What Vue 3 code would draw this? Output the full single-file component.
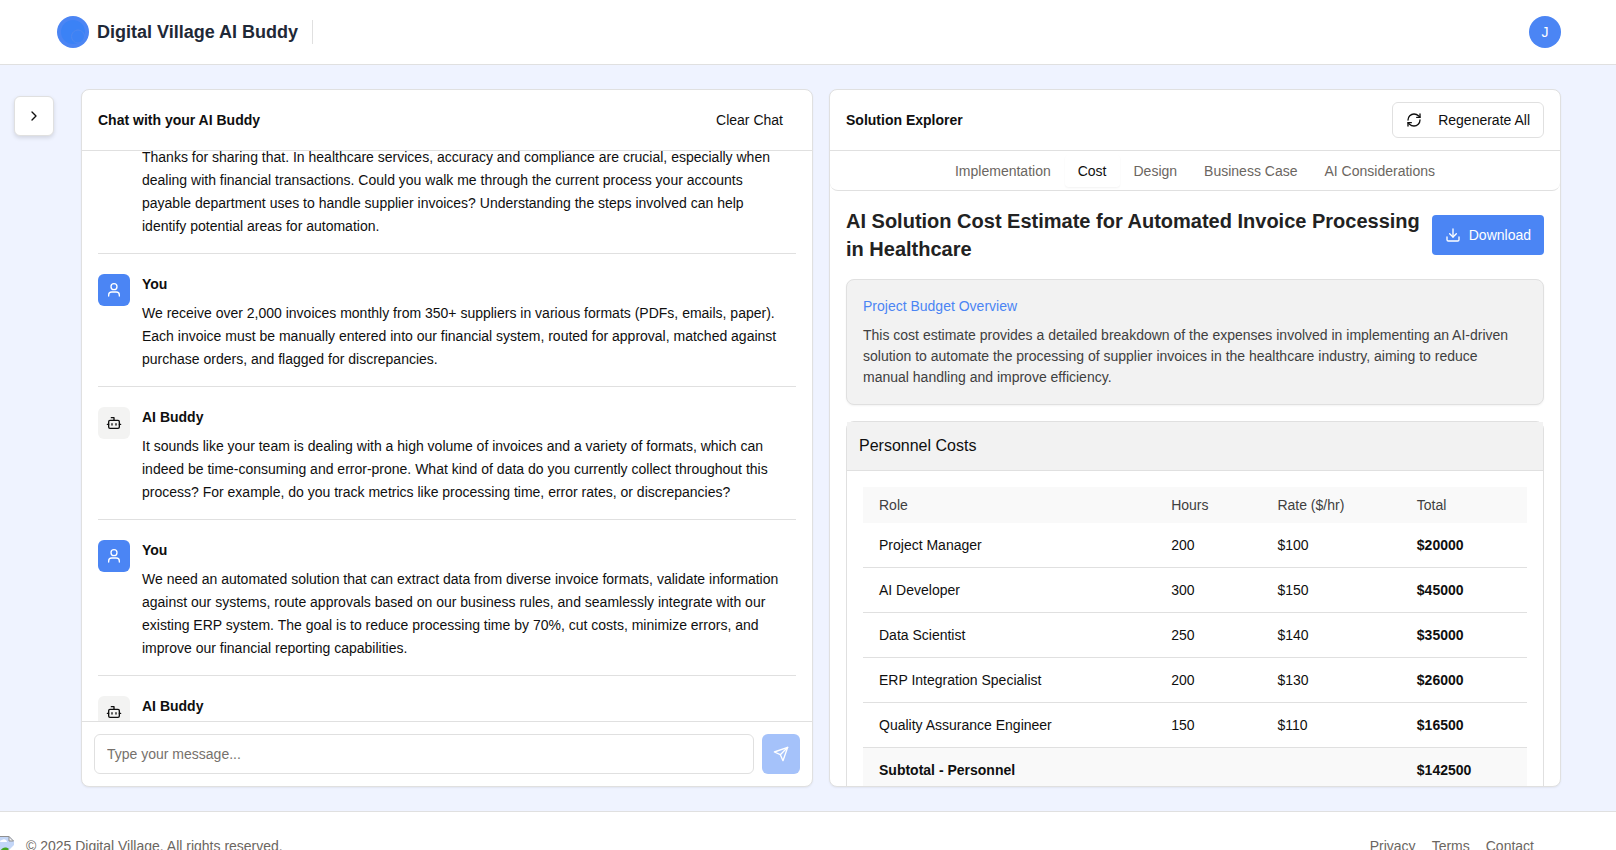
<script setup>
import { ref, onMounted } from 'vue'

const messages = [
  { who: '', text: 'Thanks for sharing that. In healthcare services, accuracy and compliance are crucial, especially when dealing with financial transactions. Could you walk me through the current process your accounts payable department uses to handle supplier invoices? Understanding the steps involved can help identify potential areas for automation.' },
  { who: 'You', text: 'We receive over 2,000 invoices monthly from 350+ suppliers in various formats (PDFs, emails, paper). Each invoice must be manually entered into our financial system, routed for approval, matched against purchase orders, and flagged for discrepancies.' },
  { who: 'AI Buddy', text: 'It sounds like your team is dealing with a high volume of invoices and a variety of formats, which can indeed be time-consuming and error-prone. What kind of data do you currently collect throughout this process? For example, do you track metrics like processing time, error rates, or discrepancies?' },
  { who: 'You', text: 'We need an automated solution that can extract data from diverse invoice formats, validate information against our systems, route approvals based on our business rules, and seamlessly integrate with our existing ERP system. The goal is to reduce processing time by 70%, cut costs, minimize errors, and improve our financial reporting capabilities.' },
  { who: 'AI Buddy', text: '' }
]

const tabs = ['Implementation', 'Cost', 'Design', 'Business Case', 'AI Considerations']
const activeTab = ref('Cost')

const rows = [
  { role: 'Project Manager', hours: 200, rate: 100 },
  { role: 'AI Developer', hours: 300, rate: 150 },
  { role: 'Data Scientist', hours: 250, rate: 140 },
  { role: 'ERP Integration Specialist', hours: 200, rate: 130 },
  { role: 'Quality Assurance Engineer', hours: 150, rate: 110 }
]
const subtotal = rows.reduce((sum, r) => sum + r.hours * r.rate, 0)

const draft = ref('')
const list = ref(null)

onMounted(() => {
  list.value.scrollTop = 33
})
</script>

<template>
  <div class="page">
    <header class="topbar">
      <svg class="logo" viewBox="0 0 32 32" aria-hidden="true">
        <circle cx="16" cy="16" r="16" fill="#4b85f4" />
        <circle cx="16" cy="16" r="12" fill="#3b82f6" />
        <circle cx="21" cy="20.500" r="6.500" fill="#3d82f5" stroke="#4f88f0" stroke-width="1" />
      </svg>
      <span class="brand">Digital Village AI Buddy</span>
      <span class="divider"></span>
      <button class="user" type="button" aria-label="Account">J</button>
    </header>

    <main class="main">
      <button class="toggle" type="button" aria-label="Open sidebar">
        <svg class="icon" viewBox="0 0 24 24"><path d="m9 18 6-6-6-6" /></svg>
      </button>

      <section class="panel">
        <div class="panel-head">
          <h2>Chat with your AI Buddy</h2>
          <button class="clear" type="button">Clear Chat</button>
        </div>
        <div ref="list" class="messages">
          <article v-for="(m, i) in messages" :key="i" class="message">
            <div class="avatar" :class="{ mine: m.who === 'You', blank: !m.who }">
              <svg v-if="m.who === 'You'" class="icon" viewBox="0 0 24 24">
                <circle cx="12" cy="7" r="4.500" />
                <path d="M4 21v-1.500a4.500 4.500 0 0 1 4.500-4.500h7a4.500 4.500 0 0 1 4.500 4.500V21" />
              </svg>
              <svg v-else-if="m.who" class="icon" viewBox="0 0 24 24">
                <path d="M12 8V4H8" />
                <rect width="16" height="12" x="4" y="8" rx="2" />
                <path d="M2 14h2M20 14h2M15 13v2M9 13v2" />
              </svg>
            </div>
            <div class="body">
              <h3 v-if="m.who">{{ m.who }}</h3>
              <p v-if="m.text">{{ m.text }}</p>
            </div>
          </article>
        </div>
        <form class="composer" @submit.prevent>
          <input v-model="draft" type="text" placeholder="Type your message..." aria-label="Message" />
          <button class="send" type="submit" aria-label="Send" :disabled="!draft">
            <svg class="icon" viewBox="0 0 24 24"><path d="m22 2-7 20-4-9-9-4Z" /><path d="M22 2 11 13" /></svg>
          </button>
        </form>
      </section>

      <section class="panel">
        <div class="panel-head">
          <h2>Solution Explorer</h2>
          <button class="regen" type="button">
            <svg class="icon" viewBox="0 0 24 24">
              <path d="M3 12a9 9 0 0 1 9-9 9.750 9.750 0 0 1 6.740 2.740L21 8" />
              <path d="M21 3v5h-5" />
              <path d="M21 12a9 9 0 0 1-9 9 9.750 9.750 0 0 1-6.740-2.740L3 16" />
              <path d="M8 16H3v5" />
            </svg>
            Regenerate All
          </button>
        </div>
        <div class="tabs" role="tablist">
          <button
            v-for="t in tabs"
            :key="t"
            class="tab"
            :class="{ active: t === activeTab }"
            type="button"
            role="tab"
            :aria-selected="t === activeTab"
            @click="activeTab = t"
          >{{ t }}</button>
        </div>
        <div class="content">
          <div class="title-row">
            <h1>AI Solution Cost Estimate for Automated Invoice Processing in Healthcare</h1>
            <button class="download" type="button">
              <svg class="icon" viewBox="0 0 24 24">
                <path d="M21 15v4a2 2 0 0 1-2 2H5a2 2 0 0 1-2-2v-4" />
                <path d="m7 10 5 5 5-5" />
                <path d="M12 15V3" />
              </svg>
              Download
            </button>
          </div>
          <div class="overview">
            <h4>Project Budget Overview</h4>
            <p>This cost estimate provides a detailed breakdown of the expenses involved in implementing an AI-driven solution to automate the processing of supplier invoices in the healthcare industry, aiming to reduce manual handling and improve efficiency.</p>
          </div>
          <div class="costs">
            <h4>Personnel Costs</h4>
            <div class="table-wrap">
              <table>
                <thead>
                  <tr>
                    <th class="c-role">Role</th>
                    <th class="c-hours">Hours</th>
                    <th class="c-rate">Rate ($/hr)</th>
                    <th>Total</th>
                  </tr>
                </thead>
                <tbody>
                  <tr v-for="r in rows" :key="r.role">
                    <td>{{ r.role }}</td>
                    <td>{{ r.hours }}</td>
                    <td>${{ r.rate }}</td>
                    <td class="strong">${{ r.hours * r.rate }}</td>
                  </tr>
                </tbody>
                <tfoot>
                  <tr>
                    <td class="strong" colspan="3">Subtotal - Personnel</td>
                    <td class="strong">${{ subtotal }}</td>
                  </tr>
                </tfoot>
              </table>
            </div>
          </div>
        </div>
      </section>
    </main>

    <footer class="footer">
      <svg class="broken" viewBox="0 0 16 16" aria-hidden="true">
        <path d="M0 0h11l5 5v11H0z" fill="#c3d6f7" />
        <path d="M2 6a2 2 0 0 1 2-2 3 3 0 0 1 5 2z" fill="#fff" />
        <path d="M2 16c1-4 5-6 9-3l-3 3z" fill="#43a520" />
        <path d="M9 16l7-7v7z" fill="#fff" />
        <path d="M0 0.500h11" fill="none" stroke="#8f8f8f" />
        <path d="M11 0.500v4.500h4.500z" fill="#f4f4f4" stroke="#8f8f8f" />
      </svg>
      <span>© 2025 Digital Village. All rights reserved.</span>
      <nav class="links">
        <a href="#privacy">Privacy</a>
        <a href="#terms">Terms</a>
        <a href="#contact">Contact</a>
      </nav>
    </footer>
  </div>
</template>

<style>
body {
  margin: 0;
}
</style>

<style scoped>
.page {
  height: 100vh;
  overflow: hidden;
  display: flex;
  flex-direction: column;
  background: #eff3ff;
  color: #0f0f0f;
  font-family: "Liberation Sans", Arial, sans-serif;
  font-size: 14px;
  line-height: 20px;
}
.page * {
  box-sizing: border-box;
}
h1, h2, h3, h4, p {
  margin: 0;
}
button, input {
  font: inherit;
  color: inherit;
}
button {
  display: flex;
  align-items: center;
  justify-content: center;
  padding: 0;
  border: 0;
  background: none;
  cursor: pointer;
}
.icon {
  width: 16px;
  height: 16px;
  flex: none;
  fill: none;
  stroke: currentColor;
  stroke-width: 2;
  stroke-linecap: round;
  stroke-linejoin: round;
}
.topbar {
  flex: none;
  display: flex;
  align-items: center;
  height: 65px;
  padding: 0 55px 0 57px;
  background: #fff;
  border-bottom: 1px solid #e0e0e0;
}
.logo {
  width: 32px;
  height: 32px;
  margin-right: 8px;
}
.brand {
  font-size: 18px;
  font-weight: 700;
  line-height: 28px;
  color: #1f2937;
}
.divider {
  width: 1px;
  height: 24px;
  margin-left: 14px;
  background: #e0e0e0;
}
.user {
  width: 32px;
  height: 32px;
  margin-left: auto;
  border-radius: 50%;
  background: #4b85f4;
  color: #fff;
}
.main {
  flex: none;
  display: flex;
  align-items: stretch;
  gap: 16px;
  height: calc(100vh - 104px);
  padding: 24px 55px 24px 14px;
}
.toggle {
  flex: none;
  width: 40px;
  height: 40px;
  margin: 7px 11px 0 0;
  border: 1px solid #e0e0e0;
  border-radius: 6px;
  background: #fff;
  box-shadow: 0 2px 4px rgba(0, 0, 0, 0.12);
}
.panel {
  flex: 1 1 0;
  min-width: 0;
  display: flex;
  flex-direction: column;
  overflow: hidden;
  background: #fff;
  border: 1px solid #e0e0e0;
  border-radius: 8px;
  box-shadow: 0 1px 2px rgba(0, 0, 0, 0.06);
}
.panel-head {
  flex: none;
  display: flex;
  align-items: center;
  justify-content: space-between;
  height: 61px;
  padding: 0 16px;
  border-bottom: 1px solid #e0e0e0;
}
.panel-head h2 {
  font-size: 14px;
  font-weight: 700;
  line-height: 22px;
}
.clear {
  height: 36px;
  padding: 0 13px;
}
.regen {
  height: 36px;
  gap: 16px;
  padding: 0 13px;
  border: 1px solid #e0e0e0;
  border-radius: 6px;
}
.messages {
  flex: 1;
  min-height: 0;
  padding: 0 16px;
  overflow-y: auto;
  scrollbar-width: none;
}
.message {
  display: flex;
  gap: 12px;
  padding: 20px 0 15px;
  border-bottom: 1px solid #e0e0e0;
}
.avatar {
  flex: none;
  display: flex;
  align-items: center;
  justify-content: center;
  width: 32px;
  height: 32px;
  border-radius: 6px;
  background: #f3f3f2;
}
.avatar.mine {
  background: #4b85f4;
  color: #fff;
}
.avatar.blank {
  background: none;
}
.body {
  padding-right: 8px;
}
.body h3 {
  font-size: 14px;
  font-weight: 700;
}
.body p {
  margin-top: 8px;
  line-height: 23px;
}
.composer {
  flex: none;
  display: flex;
  gap: 8px;
  padding: 12px;
  border-top: 1px solid #e0e0e0;
}
.composer input {
  flex: 1;
  min-width: 0;
  height: 40px;
  padding: 0 12px;
  border: 1px solid #e0e0e0;
  border-radius: 6px;
  background: #fff;
}
.composer input::placeholder {
  color: #76716c;
  opacity: 1;
}
.send {
  width: 38px;
  height: 40px;
  border-radius: 6px;
  background: #a5c2fa;
  color: #fff;
}
.tabs {
  flex: none;
  display: flex;
  align-items: center;
  justify-content: center;
  gap: 1px;
  height: 40px;
  border-bottom: 1px solid #e0e0e0;
  border-radius: 0 0 8px 8px;
}
.tab {
  height: 32px;
  padding: 0 13px;
  border-radius: 4px;
  color: #6b6661;
}
.tab.active {
  color: #0f0f0f;
  box-shadow: 0 1px 2px rgba(0, 0, 0, 0.05);
}
.content {
  flex: 1;
  min-height: 0;
  display: flex;
  flex-direction: column;
  gap: 16px;
  padding: 16px;
  overflow-y: auto;
  scrollbar-width: none;
}
.title-row {
  flex: none;
  display: flex;
  align-items: center;
  justify-content: space-between;
}
.title-row h1 {
  font-size: 20px;
  font-weight: 700;
  line-height: 28px;
  color: #222;
}
.download {
  flex: none;
  height: 40px;
  gap: 8px;
  padding: 0 13px;
  border-radius: 4px;
  background: #4b85f4;
  color: #fff;
}
.overview {
  flex: none;
  padding: 16px;
  border: 1px solid #e0e0e0;
  border-radius: 8px;
  background: #f2f2f2;
  line-height: 21px;
  box-shadow: 0 1px 2px rgba(0, 0, 0, 0.05);
}
.overview h4 {
  margin-bottom: 8px;
  font-weight: 400;
  color: #4b85f4;
}
.overview p {
  color: #404040;
}
.costs {
  flex: none;
  border: 1px solid #e0e0e0;
  border-radius: 8px;
}
.costs h4 {
  padding: 12px;
  border-bottom: 1px solid #e0e0e0;
  background: #f2f2f2;
  font-size: 16px;
  font-weight: 400;
  line-height: 24px;
}
.table-wrap {
  padding: 16px;
}
table {
  width: 100%;
  table-layout: fixed;
  border-collapse: separate;
  border-spacing: 0;
}
th {
  height: 36px;
  padding: 0 16px;
  background: #f9f9f9;
  color: #404040;
  font-weight: 400;
  text-align: left;
}
.c-role {
  width: 44%;
}
.c-hours {
  width: 16%;
}
.c-rate {
  width: 21%;
}
td {
  height: 45px;
  padding: 0 16px;
  border-bottom: 1px solid #e0e0e0;
}
tfoot td {
  background: #f9f9f9;
}
.strong {
  font-weight: 700;
}
.footer {
  flex: none;
  display: flex;
  align-items: flex-start;
  padding: 24px 82px 24px 0;
  border-top: 1px solid #e0e0e0;
  background: #fff;
  color: #6b6661;
}
.broken {
  width: 16px;
  height: 16px;
  margin: 0 12px 0 -2px;
}
.links {
  display: flex;
  gap: 16px;
  margin-left: auto;
}
.links a {
  color: inherit;
  text-decoration: none;
}
</style>
